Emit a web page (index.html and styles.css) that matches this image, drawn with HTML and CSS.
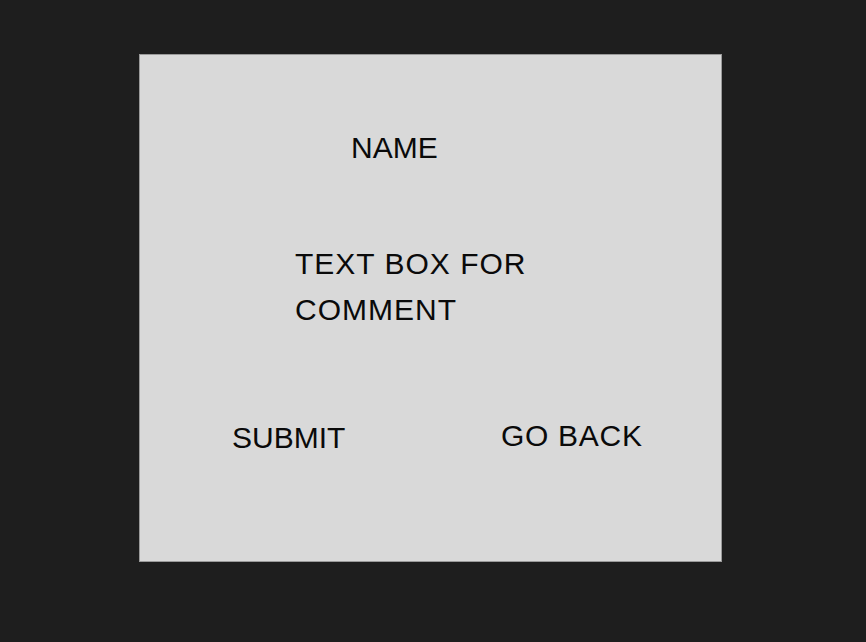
FILE: index.html
```html
<!DOCTYPE html>
<html lang="en">
<head>
<meta charset="utf-8">
<title>Comment form</title>
<link rel="stylesheet" href="styles.css">
</head>
<body>
<main class="panel">
  <div class="name">NAME</div>
  <div class="comment">TEXT BOX FOR<br>COMMENT</div>
  <div class="actions">
    <div class="submit">SUBMIT</div>
    <div class="back">GO BACK</div>
  </div>
</main>
</body>
</html>
```

FILE: styles.css
```css
html, body {
  margin: 0;
  padding: 0;
}
body {
  background: #1e1e1e;
  width: 866px;
  height: 642px;
  padding: 54px 0 0 139px;
  box-sizing: border-box;
  font-family: "Liberation Sans", Arial, sans-serif;
  font-size: 30px;
  line-height: 46px;
  color: #0a0a0a;
}
.panel {
  width: 583px;
  height: 508px;
  box-sizing: border-box;
  background: #d9d9d9;
  border: 1px solid #9a9a9a;
  padding-top: 70px;
}
.name {
  margin-left: 211px;
}
.comment {
  margin-top: 70px;
  margin-left: 155px;
  letter-spacing: 1px;
}
.actions {
  margin-top: 80px;
  display: grid;
  grid-template-columns: 269px auto;
  padding-left: 92px;
  align-items: start;
}
.submit {
  padding-top: 2px;
}
.back {
  letter-spacing: 0.7px;
}
```
